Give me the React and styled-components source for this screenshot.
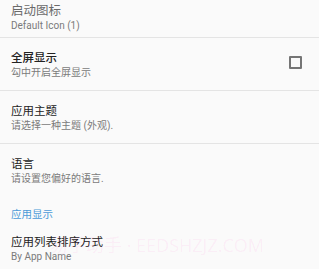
import React from 'react';
import styled, { createGlobalStyle } from 'styled-components';

const GlobalStyle = createGlobalStyle`
    html, body {
        margin: 0;
        padding: 0;
        background: #fafafa;
    }
    body {
        font-family: Roboto, "Noto Sans CJK SC", "Noto Sans", sans-serif;
    }
`

const Screen = styled.div`
    position: relative;
    width: 319px;
    height: 269px;
    overflow: hidden;
    background: #fafafa;
`

const Row = styled.div`
    display: flex;
    align-items: center;
    justify-content: space-between;
    padding: ${p => p.$compact ? '3px 11px 5px' : '11px 11px 11px'};
    min-height: ${p => p.$compact ? '0' : '30px'};
    border-bottom: ${p => p.$noDivider ? 'none' : '1px solid #e4e4e4'};
`

const Copy = styled.div`
    display: flex;
    flex-direction: column;
`

const Title = styled.div`
    font-size: ${p => p.$large ? '12.5px' : '11.5px'};
    line-height: 16px;
    color: ${p => p.$muted ? '#6a6a6a' : '#222222'};
    font-weight: ${p => p.$bold ? 500 : 400};
`

const Summary = styled.div`
    font-size: 10px;
    line-height: 13px;
    color: #7a7a7a;
`

const Category = styled.div`
    padding: 12px 11px 0;
    font-size: 10.5px;
    line-height: 14px;
    color: #4a9ad8;
`

const Checkbox = styled.span`
    width: 9px;
    height: 9px;
    border: 2px solid #757575;
    border-radius: 1px;
    margin: 0 6px 3px 0;
    flex-shrink: 0;
`

const Watermark = styled.div`
    position: absolute;
    left: 50px;
    top: 235px;
    font-family: "Open Sans", "Noto Sans CJK SC", sans-serif;
    font-size: 18px;
    line-height: 20px;
    color: rgba(255, 60, 200, 0.08);
    white-space: nowrap;
    pointer-events: none;
`

const Pref = ({ title, summary, checkbox, ...rest }) => (
    <Row $compact={rest.compact} $noDivider={rest.noDivider}>
        <Copy>
            <Title $large={rest.large} $muted={rest.muted} $bold={rest.bold}>{title}</Title>
            <Summary>{summary}</Summary>
        </Copy>
        {checkbox && <Checkbox />}
    </Row>
)

const App = () => {
    return (
        <Screen>
            <GlobalStyle />
            <Pref title="启动图标" summary="Default Icon (1)" compact large muted />
            <Pref title="全屏显示" summary="勾中开启全屏显示" checkbox bold />
            <Pref title="应用主题" summary="请选择一种主题 (外观)." />
            <Pref title="语言" summary="请设置您偏好的语言." noDivider />
            <Category>应用显示</Category>
            <Pref title="应用列表排序方式" summary="By App Name" noDivider />
            <Watermark>易手助手 · EEDSHZJZ.COM</Watermark>
        </Screen>
    )
}

export default App
